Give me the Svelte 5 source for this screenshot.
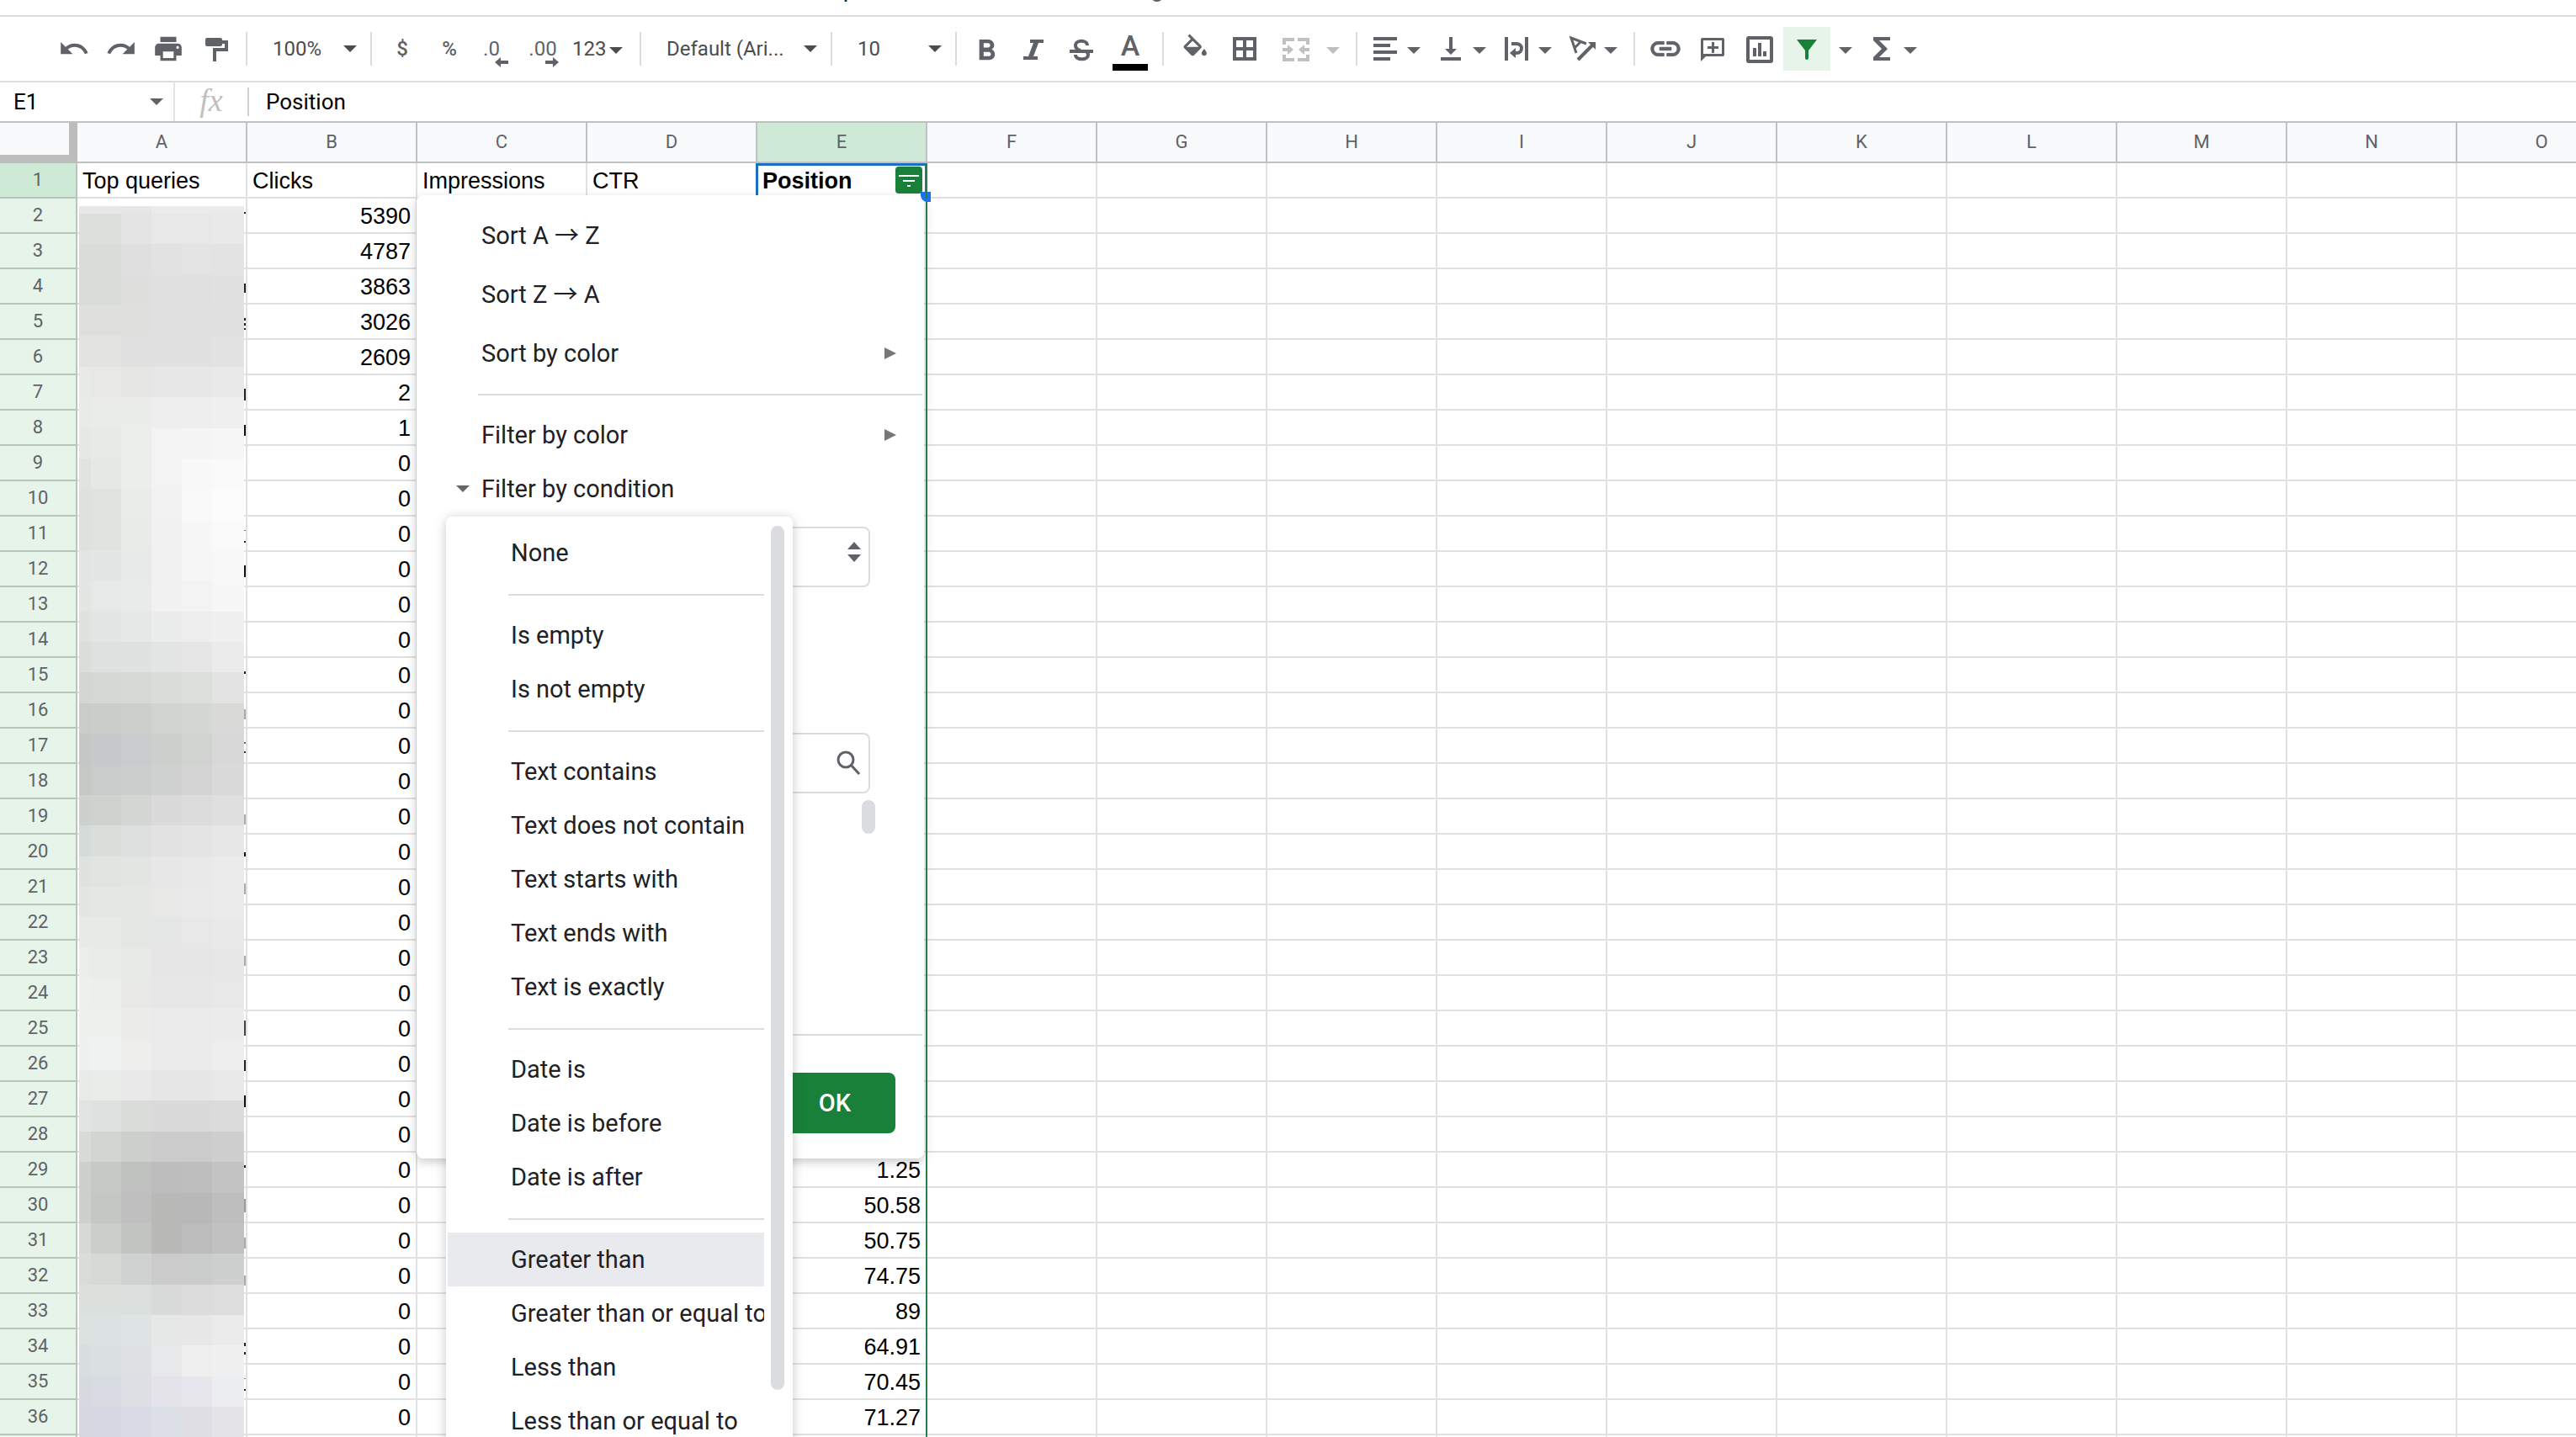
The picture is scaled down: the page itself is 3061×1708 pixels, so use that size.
<script>
	const columns = 'ABCDEFGHIJKLMNO'.split('');
	const titles = { A: 'Top queries', B: 'Clicks', C: 'Impressions', D: 'CTR', E: 'Position' };

	const clicks = [5390, 4787, 3863, 3026, 2609, 2, 1];
	const positions = { 29: 1.25, 30: 50.58, 31: 50.75, 32: 74.75, 33: 89, 34: 64.91, 35: 70.45, 36: 71.27 };

	const rows = Array.from({ length: 36 }, (_, i) => i + 2);

	function cell(column, row) {
		if (column === 'B') return clicks[row - 2] ?? 0;
		if (column === 'E') return positions[row] ?? '';
		return '';
	}

	const conditions = [
		['None'],
		['Is empty', 'Is not empty'],
		['Text contains', 'Text does not contain', 'Text starts with', 'Text ends with', 'Text is exactly'],
		['Date is', 'Date is before', 'Date is after'],
		['Greater than', 'Greater than or equal to', 'Less than', 'Less than or equal to']
	];

	let active = 'Greater than';
	let nameBox = 'E1';
	let formula = 'Position';

	// pixelated cover for the query names, one line per block row
	const blocks = `
		e6e7e6 e6e7e6 e6e6e6 ebebeb ebebeb ebebeb
		dcdfdc dddfdc e4e4e4 e8e8e8 e8e8e8 e9e9e9
		dadcd9 dadcd9 dfdfdf e2e2e2 e4e4e4 e3e3e3
		dadcda dadcda dededd e0e0e0 e0e0e0 e1e1e1
		dfe0dd dfe0dd dfe0de e0e0e0 e0e0e0 e0e0e0
		e3e4e1 e3e4e1 e1e1e1 e1e1e1 e1e1e1 e2e2e2
		e8eae7 e8e9e6 e6e7e5 e7e7e7 e7e7e7 e9e9e9
		e8ebe7 e9ece8 ebede9 eeeeee eeeeee f0f0f0
		e5e8e5 e7eae7 eceeea f3f3f3 f4f4f4 f6f6f6
		e0e4e1 e5e9e6 ebeeea f3f3f3 f8f8f8 fafafa
		dde2df dfe4e1 e9ece8 f2f2f2 f9f9f9 fcfcfc
		dde2df dfe4e1 e8ebe8 f1f1f1 f7f7f7 fafafa
		e1e5e3 e2e6e5 e7eae9 f1f1f1 f6f6f6 f8f8f8
		e3e7e4 e5e9e7 e8ebe9 f1f1f1 f3f3f3 f7f7f7
		dfe3e0 e2e6e4 e5e8e6 ebedec eeeeee f0f0f0
		dadedb dee1df dfe2e0 e3e4e4 e6e6e6 ebebeb
		d3d6d3 d5d8d5 d6d9d5 dadcd9 dddfdb e3e3e3
		c9cdca cacecb cccfcc d0d3d0 d5d7d4 d9dad8
		c4c8c5 c5c9c9 c9cccc cccfcb d0d3cf d8d8d8
		c4c9c6 c8cccb cccece cfd1d0 d3d4d3 dadada
		ccd1cd cfd3d0 d4d6d4 d9dad9 dcdcdc dfdfdf
		d5dbd8 d9dedb dde0de e1e2e1 e4e4e4 e7e7e7
		dfe3df e1e4e1 e3e5e2 e6e7e6 e9e9e9 ebebeb
		e3e7e3 e4e7e3 e5e7e4 e8e8e7 eaeaea ebebeb
		e7eae7 e7eae7 e5e7e4 e5e6e6 e8e8e8 e9e9e9
		ebeeeb e9edea e7eae7 e6e6e6 e6e6e6 e7e7e7
		edf0ed edefed e8e9e7 e7e7e7 e7e7e7 e8e8e8
		eef1ee eff1ee ecedeb ebebeb ebebeb ececec
		eef1ef f0f2f1 eeefed ebebeb ebebeb eeeeee
		e8ece8 eaecea e8e9e8 e6e6e6 e6e6e6 e8e8e8
		e1e4e3 dfe2e0 dadcd9 dadada dadada dbdbdb
		d7dad7 d3d5d1 cdcfcc cacbca cbcbcb cfcfcf
		cdd0cd c5cac6 bfc1be bdbdbd bebebe c4c4c4
		cdd0cd c4c8c4 bebfbe b9bab8 b8b8b8 bebebe
		d6d9d6 cbcfcb c1c5c0 b9bab7 bcbcbc c1c1c1
		d9ddd9 d5dad6 cfd2d0 cacbca cacccb cecfcf
		dbe0dc dbe0dd dadedc d9dbda dbdcdb dddddd
		dce2df dce2e1 dee3e3 e6e8e8 e7e7e7 ebebeb
		d8dde0 dadfe1 dee1e4 e6e8ea efefef f0f0f0
		d6dadf d8dbe2 dddfe5 e3e3e9 e6e6ec ecedf0
		d5d8de d5d8e2 d8dbe5 dddfe6 dfdee5 e4e4e8
	`.trim().split('\n').map((line) => line.trim().split(' '));

	const edges = [0, 14, 50, 86, 122, 158, 196];
	const blockTop = (i) => (i === 0 ? 0 : Math.round(9 + (i - 1) * 36.36));

	// ends of the letters that stick out past the cover: top, height, colour
	const ends = [
		[7, 2, '#222'], [92, 11, '#222'], [133, 3, '#222'], [139, 3, '#222'], [145, 2, '#222'], [217, 14, '#222'],
		[260, 13, '#111'], [385, 1, '#666'], [398, 2, '#222'], [427, 14, '#111'], [553, 3, '#222'],
		[598, 12, '#aaa'], [637, 2, '#666'], [648, 2, '#333'], [723, 12, '#aaa'], [768, 5, '#111'],
		[805, 13, '#aaa'], [891, 12, '#aaa'], [968, 18, '#444'], [1015, 13, '#222'], [1057, 14, '#111'],
		[1140, 3, '#222'], [1180, 16, '#999'], [1226, 13, '#aaa'], [1271, 12, '#aaa'], [1351, 4, '#222'],
		[1362, 3, '#222'], [1393, 1, '#888'], [1406, 2, '#222']
	];
</script>

{#snippet caret()}
	<svg class="caret" width="16" height="8" viewBox="0 0 16 8" aria-hidden="true"><path d="M0 0h16L8 8z" /></svg>
{/snippet}

<div class="app">
	<div class="menubar">
		<span>Help</span>
		<span>Last edit was seconds ago</span>
	</div>

	<div class="toolbar">
		<button class="tool" aria-label="Undo">
			<svg class="icon" viewBox="0 0 24 24"><path d="M12.5 8c-2.65 0-5.05.99-6.9 2.6L2 7v9h9l-3.62-3.62c1.39-1.16 3.16-1.88 5.12-1.88 3.54 0 6.55 2.31 7.6 5.5l2.37-.78C21.08 11.03 17.15 8 12.5 8z" /></svg>
		</button>
		<button class="tool" aria-label="Redo">
			<svg class="icon" viewBox="0 0 24 24"><path d="M18.4 10.6C16.55 8.99 14.15 8 11.5 8c-4.65 0-8.58 3.03-9.96 7.22L3.9 16c1.05-3.19 4.05-5.5 7.6-5.5 1.95 0 3.73.72 5.12 1.88L13 16h9V7l-3.6 3.6z" /></svg>
		</button>
		<button class="tool" aria-label="Print">
			<svg class="icon" viewBox="0 0 24 24"><path d="M19 8H5c-1.66 0-3 1.34-3 3v6h4v4h12v-4h4v-6c0-1.66-1.34-3-3-3zm-3 11H8v-5h8v5zm3-7c-.55 0-1-.45-1-1s.45-1 1-1 1 .45 1 1-.45 1-1 1zm-1-9H6v4h12V3z" /></svg>
		</button>
		<button class="tool" aria-label="Paint format">
			<svg class="icon" viewBox="0 0 38 38">
				<rect x="7" y="6" width="20" height="10" rx="2" />
				<path class="line" d="M26 11h6v9H18v14" />
			</svg>
		</button>
		<i class="sep"></i>
		<label class="pick">
			<select aria-label="Zoom"><option>100%</option></select>
			{@render caret()}
		</label>
		<i class="sep"></i>
		<button class="tool strong">$</button>
		<button class="tool strong">%</button>
		<button class="tool decimals fewer" aria-label="Decrease decimal places">
			.0
			<svg width="16" height="12" viewBox="0 0 16 12"><path d="M0 6l7-6v4h9v4H7v4z" /></svg>
		</button>
		<button class="tool decimals" aria-label="Increase decimal places">
			.00
			<svg width="16" height="12" viewBox="0 0 16 12"><path d="M16 6L9 0v4H0v4h9v4z" /></svg>
		</button>
		<button class="tool combo number">123{@render caret()}</button>
		<i class="sep"></i>
		<label class="pick font">
			<select aria-label="Font"><option>Default (Ari...</option></select>
			{@render caret()}
		</label>
		<i class="sep"></i>
		<label class="pick">
			<select aria-label="Font size"><option>10</option></select>
			{@render caret()}
		</label>
		<i class="sep"></i>
		<button class="tool" aria-label="Bold">
			<svg class="icon" viewBox="1.4 -.6 22 22"><path d="M15.6 10.79c.97-.67 1.65-1.77 1.65-2.79 0-2.26-1.75-4-4-4H7v14h7.04c2.09 0 3.71-1.7 3.71-3.79 0-1.52-.86-2.82-2.15-3.42zM10 6.5h3c.83 0 1.5.67 1.5 1.5s-.67 1.5-1.5 1.5h-3v-3zm3.5 9H10v-3h3.5c.83 0 1.5.67 1.5 1.5s-.67 1.5-1.5 1.5z" /></svg>
		</button>
		<button class="tool" aria-label="Italic">
			<svg class="icon" viewBox="0 0 38 38"><path d="M14 8h16v4h-6l-6 16h5v4H6v-4h6l6-16h-4z" /></svg>
		</button>
		<button class="tool" aria-label="Strikethrough">
			<svg class="icon" viewBox="0 0 38 38">
				<path d="M5 20h28v4H5z" />
				<path class="line" d="M26 15c0-7-14-7-14 0 0 3 2 5 6 6M12 26c0 7 15 7 15 0 0-2-1-3-3-4" />
			</svg>
		</button>
		<button class="tool wide color" aria-label="Text color">A<i></i></button>
		<i class="sep"></i>
		<button class="tool wide" aria-label="Fill color">
			<svg class="icon" viewBox="0 -1 25 25"><path d="M16.56 8.94L7.62 0 6.21 1.41l2.38 2.38-5.15 5.15c-.59.59-.59 1.54 0 2.12l5.5 5.5c.29.29.68.44 1.06.44s.77-.15 1.06-.44l5.5-5.5c.59-.58.59-1.53 0-2.12zM5.21 10L10 5.21 14.79 10H5.21zM19 11.5s-2 2.17-2 3.5c0 1.1.9 2 2 2s2-.9 2-2c0-1.33-2-3.5-2-3.5z" /></svg>
		</button>
		<button class="tool" aria-label="Borders">
			<svg class="icon" viewBox="0 0 38 38"><path fill-rule="evenodd" d="M5 5h28v28H5zm4 4v8h8V9zm12 0v8h8V9zM9 21v8h8v-8zm12 0v8h8v-8z" /></svg>
		</button>
		<button class="tool combo merge" aria-label="Merge cells" disabled>
			<svg class="icon" viewBox="0 0 38 38">
				<path class="line" d="M5 14V8h12M21 8h12v6M5 26v6h12M21 32h12v-6" />
				<path d="M3 18h6v-4l7 6-7 6v-4H3zM35 18h-6v-4l-7 6 7 6v-4h6z" />
			</svg>
			{@render caret()}
		</button>
		<i class="sep"></i>
		<button class="tool combo" aria-label="Horizontal align">
			<svg class="icon" viewBox="0 0 38 38"><path d="M5 5h28v4H5zM5 13h20v4H5zM5 21h28v4H5zM5 29h20v4H5z" /></svg>
			{@render caret()}
		</button>
		<button class="tool combo" aria-label="Vertical align">
			<svg class="icon" viewBox="0 0 38 38"><path d="M7 29h24v4H7zM17 5h4v14h5l-7 7-7-7h5z" /></svg>
			{@render caret()}
		</button>
		<button class="tool combo" aria-label="Text wrapping">
			<svg class="icon" viewBox="0 0 38 38">
				<path d="M5 5h4v28H5zM29 5h4v28h-4zM11 24l7-6v12z" />
				<path class="line" d="M13 13h6c8 0 8 11 0 11h-2" />
			</svg>
			{@render caret()}
		</button>
		<button class="tool combo" aria-label="Text rotation">
			<svg class="icon" viewBox="0 0 38 38">
				<path class="line thin" d="M12 24L6 6l18 7M10 18l8-8" />
				<path class="line" d="M14 32l17-17" />
				<path d="M26 11h9v9z" />
			</svg>
			{@render caret()}
		</button>
		<i class="sep"></i>
		<button class="tool" aria-label="Insert link">
			<svg class="icon" viewBox="1 1 22 22"><path stroke="currentColor" stroke-width=".5" d="M3.9 12c0-1.71 1.39-3.1 3.1-3.1h4V7H7c-2.76 0-5 2.24-5 5s2.24 5 5 5h4v-1.9H7c-1.71 0-3.1-1.39-3.1-3.1zM8 13h8v-2H8v2zm9-6h-4v1.9h4c1.71 0 3.1 1.39 3.1 3.1s-1.39 3.1-3.1 3.1h-4V17h4c2.76 0 5-2.24 5-5s-2.24-5-5-5z" /></svg>
		</button>
		<button class="tool" aria-label="Insert comment">
			<svg class="icon" viewBox="0 0 38 38">
				<path fill-rule="evenodd" d="M5 8q0-2 2-2h24q2 0 2 2v18q0 2-2 2H11l-6 6zm3 1v16h22V9z" />
				<path d="M18 11h3v5h5v3h-5v5h-3v-5h-5v-3h5z" />
			</svg>
		</button>
		<button class="tool" aria-label="Insert chart">
			<svg class="icon" viewBox="0 0 38 38">
				<rect class="line" x="5" y="6" width="28" height="28" rx="1" />
				<path d="M11 18h4v10h-4zM17 12h4v16h-4zM23 22h4v6h-4z" />
			</svg>
		</button>
		<button class="tool on" aria-label="Remove filter">
			<svg class="icon" viewBox="0 0 38 38"><path d="M7 8h24l-10 13v9q0 2-2 2t-2-2v-9z" /></svg>
		</button>
		<button class="tool views" aria-label="Filter views">{@render caret()}</button>
		<button class="tool combo" aria-label="Functions">
			<svg class="icon" viewBox="0 0 38 38"><path d="M9 5h20v4H16l10 10-10 10h13v4H9v-4l10-10L9 9z" /></svg>
			{@render caret()}
		</button>
	</div>

	<div class="formula-bar">
		<label class="name">
			<input aria-label="Name box" bind:value={nameBox} />
			{@render caret()}
		</label>
		<span class="fx">fx</span>
		<input class="formula" aria-label="Formula" bind:value={formula} />
	</div>

	<table>
		<colgroup>
			<col class="head-col" />
			{#each columns as c}<col class="data-col" />{/each}
		</colgroup>
		<thead>
			<tr>
				<td class="corner"></td>
				{#each columns as c}
					<th class:current={c === 'E'}>{c}</th>
				{/each}
			</tr>
		</thead>
		<tbody>
			<tr>
				<th class="current">1</th>
				{#each columns as c}
					<td class:filtered={c === 'E'} class:anchor={c === 'E'}>
						{titles[c] ?? ''}
						{#if c === 'E'}
							<span class="selection"></span>
							<button class="filter" aria-label="Filter">
								<svg width="32" height="32" viewBox="0 0 32 32"><path d="M4 10h24v2H4zM9 16h14v2H9zM14 22h4v2h-4z" /></svg>
							</button>

							<div class="popup">
								<button class="row tall">Sort A → Z</button>
								<button class="row tall">Sort Z → A</button>
								<button class="row tall">Sort by color <svg class="more" width="14" height="14" viewBox="0 0 14 14"><path d="M0 0l14 7-14 7z" /></svg></button>
								<hr />
								<button class="row">Filter by color <svg class="more" width="14" height="14" viewBox="0 0 14 14"><path d="M0 0l14 7-14 7z" /></svg></button>
								<button class="row open">{@render caret()}Filter by condition</button>

								<div class="field">
									<select aria-label="Condition"><option></option></select>
									<svg width="16" height="24" viewBox="0 0 16 24"><path d="M8 0l8 9H0zM0 15h16l-8 9z" /></svg>
								</div>
								<div class="field search">
									<input type="text" aria-label="Search values" />
									<svg width="30" height="30" viewBox="0 0 30 30"><circle cx="12" cy="12" r="9" /><path d="M18 18l10 11" /></svg>
								</div>
								<div class="values"><i></i></div>
								<hr class="last" />
								<div class="actions">
									<button class="ok">OK</button>
								</div>
								<i class="handle"></i>

								<div class="conditions">
									<div class="list">
										{#each conditions as group, i}
											{#if i > 0}<hr />{/if}
											{#each group as name}
												<button class="row" class:active={name === active} on:click={() => (active = name)}>{name}</button>
											{/each}
										{/each}
									</div>
									<i class="thumb"></i>
								</div>
							</div>
						{/if}
					</td>
				{/each}
			</tr>
			{#each rows as row}
				<tr>
					<th>{row}</th>
					{#each columns as c}
						<td class:value={c === 'B' || c === 'E'} class:filtered={c === 'E'} class:cover={c === 'A' && row === 2}>
							{cell(c, row)}
							{#if c === 'A' && row === 2}
								<svg width="198" height="1464" viewBox="0 0 198 1464" shape-rendering="crispEdges" aria-hidden="true">
									{#each blocks as line, y}
										{#each line as fill, x}
											<rect
												x={edges[x]}
												y={blockTop(y)}
												width={edges[x + 1] - edges[x]}
												height={blockTop(y + 1) - blockTop(y)}
												fill="#{fill}"
											/>
										{/each}
									{/each}
									{#each ends as [y, height, fill]}
										<rect x="196" {y} width="2" {height} {fill} />
									{/each}
								</svg>
							{/if}
						</td>
					{/each}
				</tr>
			{/each}
		</tbody>
	</table>
</div>

<style>
	:global(body) {
		margin: 0;
		background: #fff;
	}

	.app {
		height: 100vh;
		overflow: hidden;
		font-family: Roboto, "Noto Sans CJK JP", "Liberation Sans", sans-serif;
		color: #202124;
	}

	button, input, select {
		margin: 0;
		padding: 0;
		border: 0;
		background: none;
		font: inherit;
		color: inherit;
		appearance: none;
		outline: none;
	}

	svg {
		display: block;
		flex: none;
		fill: currentColor;
	}

	hr {
		height: 2px;
		border: 0;
		background: #dadce0;
	}

	.menubar {
		display: flex;
		gap: 50px;
		height: 18px;
		padding-left: 960px;
		overflow: hidden;
		font-size: 28px;
		line-height: 1;
	}

	.menubar span {
		margin-top: -27px;
	}

	.menubar span + span {
		color: #5f6368;
	}

	/* toolbar */

	.toolbar {
		display: flex;
		align-items: center;
		height: 76px;
		padding-left: 60px;
		border-top: 2px solid #dadce0;
		border-bottom: 2px solid #dadce0;
		color: #5f6368;
		font-size: 24px;
	}

	.tool {
		position: relative;
		display: flex;
		align-items: center;
		justify-content: center;
		width: 56px;
		height: 52px;
		flex: none;
	}

	.strong {
		font-weight: 500;
	}

	.icon {
		width: 38px;
		height: 38px;
	}

	.line {
		fill: none;
		stroke: currentColor;
		stroke-width: 4;
	}

	.thin {
		stroke-width: 3;
	}

	.sep {
		width: 2px;
		height: 40px;
		margin: 0 8px;
		flex: none;
		background: #dadce0;
	}

	.pick {
		display: grid;
		align-items: center;
		width: 130px;
		flex: none;
		color: #4a4c50;
	}

	.pick > :global(*), .pick select {
		grid-area: 1 / 1;
	}

	.pick select {
		height: 52px;
		padding-left: 22px;
	}

	.pick .caret {
		justify-self: end;
		margin-right: 8px;
		pointer-events: none;
	}

	.font {
		width: 209px;
	}

	.decimals svg {
		position: absolute;
		right: 10px;
		bottom: 4px;
	}

	.decimals {
		padding-right: 2px;
	}

	.decimals.fewer {
		padding-right: 12px;
	}

	.decimals.fewer svg {
		right: 14px;
	}

	.combo {
		width: 78px;
		justify-content: flex-start;
		gap: 7px;
		padding-left: 6px;
	}

	.combo .caret, .views .caret {
		margin-top: 3px;
	}

	.number {
		gap: 4px;
		color: #4a4c50;
	}

	.merge {
		width: 96px;
		padding-left: 14px;
		gap: 17px;
		color: #c0c0c0;
	}

	.wide {
		width: 60px;
	}

	.color {
		flex-direction: column;
		justify-content: flex-start;
		gap: 8px;
		padding-top: 8px;
		font-size: 34px;
		font-weight: 500;
		line-height: 28px;
	}

	.color i {
		width: 42px;
		height: 8px;
		background: #000;
	}

	.on {
		background: #e6f4ea;
		color: #188038;
	}

	.views {
		width: 36px;
	}

	/* name box and formula */

	.formula-bar {
		display: flex;
		align-items: center;
		height: 46px;
		border-bottom: 2px solid #c0c0c0;
		font-size: 26px;
		color: #000;
	}

	.name {
		display: flex;
		align-items: center;
		width: 208px;
		height: 46px;
		padding: 0 12px 0 16px;
		box-sizing: border-box;
		border-right: 2px solid #e4e4e4;
	}

	.name input {
		width: 100%;
		min-width: 0;
	}

	.name .caret {
		color: #5f6368;
	}

	.fx {
		width: 88px;
		height: 34px;
		box-sizing: border-box;
		border-right: 2px solid #d0d0d0;
		font: italic 38px/30px "Liberation Serif", serif;
		text-align: center;
		color: #c0c0c0;
	}

	.formula {
		flex: 1;
		padding-left: 20px;
	}

	/* sheet */

	table {
		width: 0;
		table-layout: fixed;
		border-collapse: separate;
		border-spacing: 0;
	}

	.head-col {
		width: 92px;
	}

	.data-col {
		width: 202px;
	}

	th, td {
		height: 42px;
		padding: 0;
		box-sizing: border-box;
		border-right: 2px solid #e1e1e1;
		border-bottom: 2px solid #e1e1e1;
		line-height: 40px;
		white-space: nowrap;
	}

	th {
		font-size: 22px;
		font-weight: 400;
		color: #5f6368;
		background: #e6f4ea;
		border-color: #b7c5bb;
	}

	thead th {
		height: 48px;
		background: #f8f9fa;
		border-color: #c0c0c0;
	}

	.corner {
		background: #f8f9fa;
		border-right: 10px solid #bcbcbc;
		border-bottom: 10px solid #bcbcbc;
		line-height: 30px;
	}

	th.current {
		background: #ceead6;
	}

	tbody td {
		padding: 2px 6px 0 6px;
		font-family: "Liberation Sans", Arial, sans-serif;
		font-size: 27px;
		line-height: 38px;
		color: #000;
	}

	.value {
		text-align: right;
	}

	.filtered, .cover {
		position: relative;
	}

	.filtered::after {
		content: "";
		position: absolute;
		top: 0;
		right: -2px;
		bottom: -2px;
		width: 2px;
		background: #2b7d4d;
	}

	.cover svg {
		position: absolute;
		left: 2px;
		top: 9px;
	}

	.anchor {
		z-index: 1;
		font-weight: 700;
	}

	.selection {
		position: absolute;
		inset: 0 -2px 0 -2px;
		border: 3px solid #1b6fc0;
		border-bottom: 0;
	}

	.filter {
		position: absolute;
		right: 4px;
		top: 4px;
		border-radius: 4px;
		background: #188038;
		color: #fff;
	}

	/* filter popup */

	.popup {
		position: absolute;
		right: 2px;
		top: 38px;
		width: 603px;
		height: 1145px;
		padding-top: 13px;
		box-sizing: border-box;
		border-radius: 8px;
		background: #fff;
		box-shadow: 0 4px 12px rgba(60, 64, 67, 0.28);
		font-family: Roboto, "Noto Sans CJK JP", "Liberation Sans", sans-serif;
		font-size: 29px;
		font-weight: 400;
		color: #202124;
	}

	.row {
		display: flex;
		align-items: center;
		width: 100%;
		height: 64px;
		padding-left: 77px;
		line-height: 60px;
		white-space: nowrap;
	}

	.tall {
		height: 70px;
	}

	.popup > hr {
		margin: 13px 2px 15px 73px;
	}

	.more {
		margin-left: auto;
		margin-right: 33px;
		color: #777;
	}

	.open {
		padding-left: 47px;
		gap: 14px;
	}

	.open .caret {
		color: #666;
	}

	.field {
		display: flex;
		align-items: center;
		height: 72px;
		margin: 13px 64px 0 47px;
		padding-right: 9px;
		box-sizing: border-box;
		border: 2px solid #dadce0;
		border-radius: 8px;
	}

	.field select, .field input {
		flex: 1;
		height: 60px;
	}

	.field svg {
		color: #5f6368;
		margin-bottom: 12px;
	}

	.search {
		margin-top: 173px;
	}

	.search svg {
		margin-bottom: 2px;
		fill: none;
		stroke: currentColor;
		stroke-width: 3;
	}

	.values {
		display: flex;
		justify-content: flex-end;
		height: 278px;
		padding: 8px 58px 0 0;
	}

	.values i {
		width: 16px;
		height: 40px;
		border-radius: 8px;
		background: #dadce0;
	}

	/* only the part right of the condition list shows */
	.popup > .last {
		margin: 0 2px 0 73px;
	}

	.actions {
		display: flex;
		justify-content: flex-end;
		padding: 44px 34px 0 0;
	}

	.ok {
		width: 144px;
		height: 72px;
		border-radius: 8px;
		background: #188038;
		color: #fff;
		font-weight: 500;
	}

	.handle {
		position: absolute;
		right: -8px;
		top: -4px;
		width: 12px;
		height: 12px;
		background: #1a73e8;
		border-bottom-left-radius: 8px;
	}

	.conditions {
		position: absolute;
		left: 35px;
		top: 382px;
		display: flex;
		gap: 8px;
		width: 412px;
		height: 1160px;
		padding: 11px 10px 0 2px;
		box-sizing: border-box;
		border-radius: 8px;
		background: #fff;
		box-shadow: 0 2px 14px rgba(60, 64, 67, 0.28);
	}

	.list {
		flex: 1;
		overflow: hidden;
	}

	.conditions .row {
		padding-left: 75px;
	}

	.conditions hr {
		margin: 17px 0 15px 72px;
	}

	.active {
		background: #e8eaed;
	}

	.thumb {
		width: 16px;
		height: 1027px;
		border-radius: 8px;
		background: #dadce0;
	}
</style>
